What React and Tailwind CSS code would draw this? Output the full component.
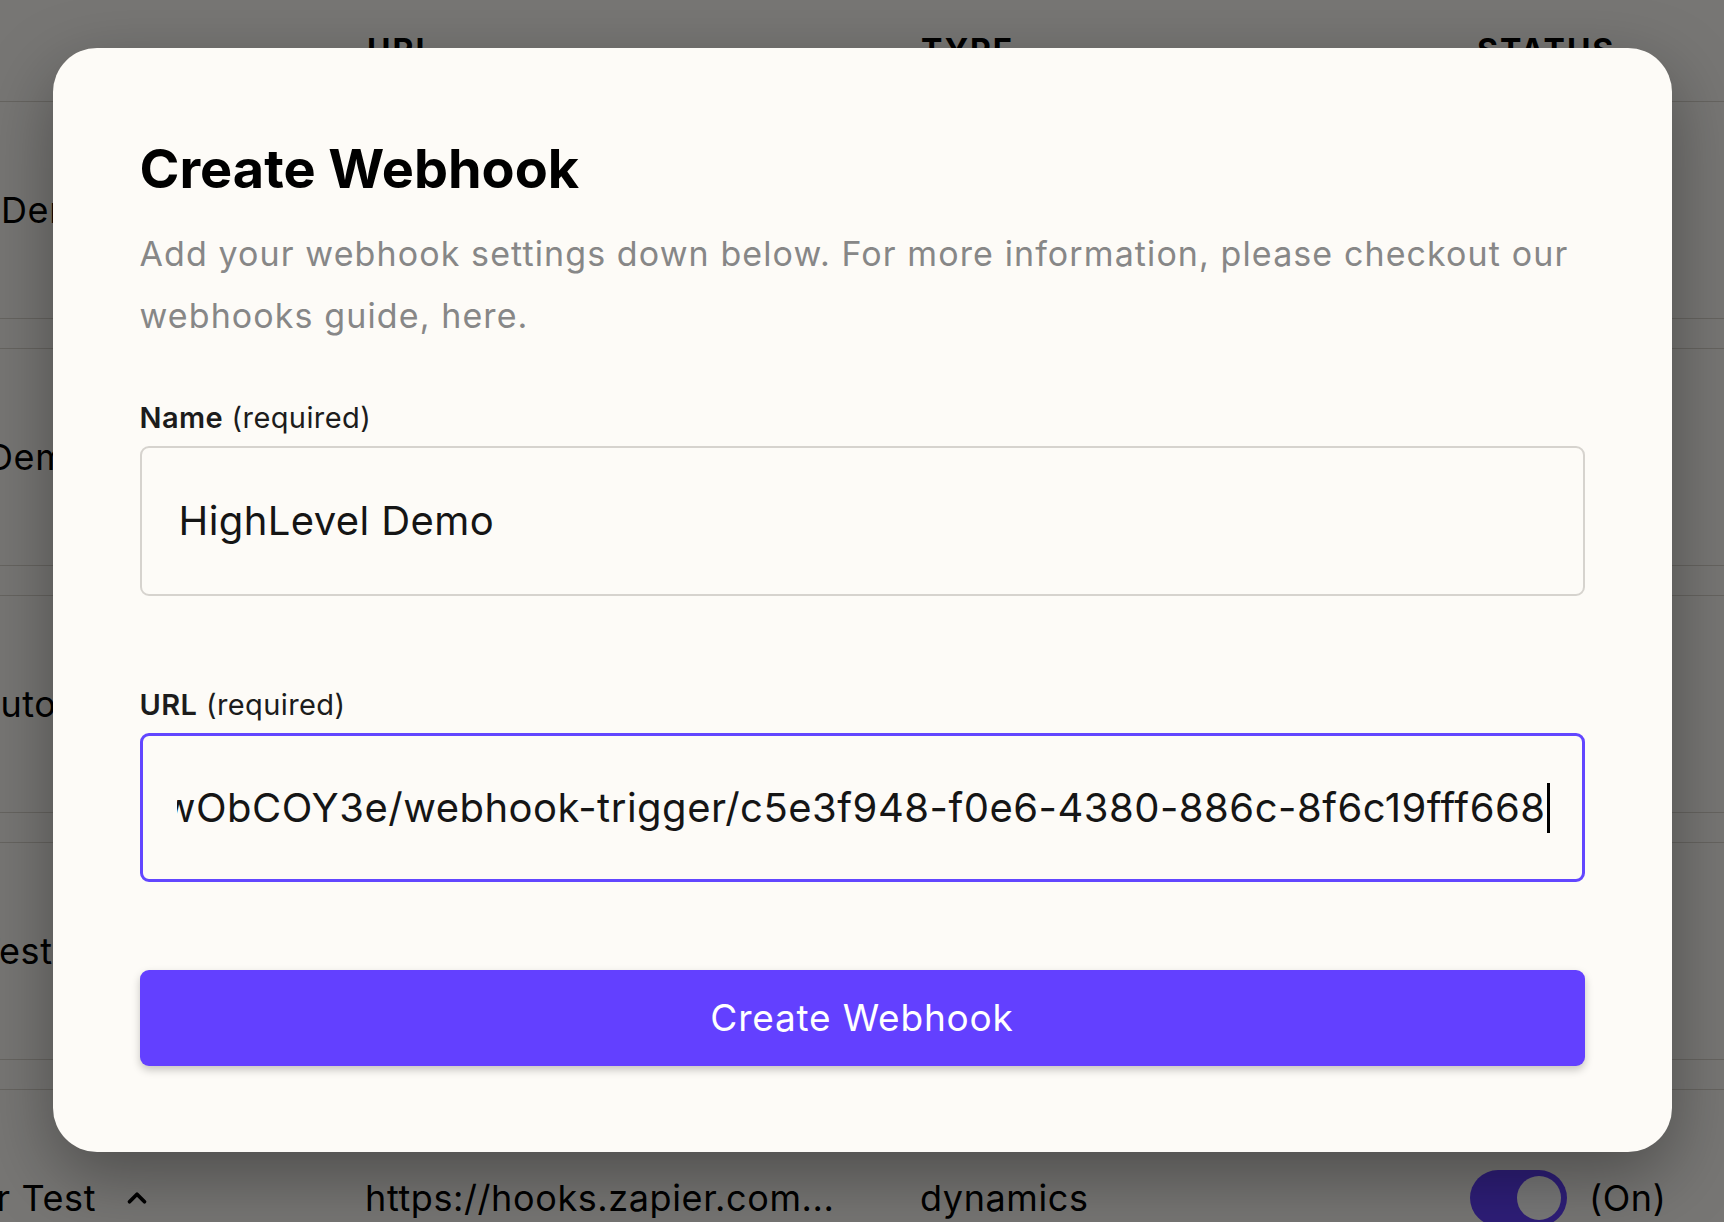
import React from "react";
import { ChevronUp } from "lucide-react";

const rows = [
  { name: "Demo", off: "ml-[1px]" },
  { name: "Demo", off: "-ml-[13px]" },
  { name: "Auto", off: "-ml-[25px]" },
  { name: "Test", off: "-ml-[22px]" },
  { name: "Zapier Test", off: "-ml-[101px]", chevron: true },
];

function Toggle() {
  return (
    <div className="flex h-[56px] w-[97px] items-center justify-end rounded-full bg-[#6340ff] px-[6px]">
      <div className="h-[44px] w-[44px] rounded-full bg-white" />
    </div>
  );
}

function Row({ row, last }) {
  return (
    <div>
      <div className="grid h-[217px] grid-cols-[365px_555px_550px_1fr] items-center border-b border-[#d9d5cc] text-[36px] tracking-[0.6px] text-black">
        <div className="flex items-center overflow-visible">
          <span className={`whitespace-nowrap ${row.off}`}>{row.name}</span>
          {row.chevron && <ChevronUp className="ml-[26px] h-[30px] w-[30px]" strokeWidth={3} />}
        </div>
        <div className="whitespace-nowrap">https://hooks.zapier.com...</div>
        <div>dynamics</div>
        <div className="flex items-center gap-[22px]">
          <Toggle />
          <span>(On)</span>
        </div>
      </div>
      {!last && <div className="h-[30px] border-b border-[#d9d5cc]" />}
    </div>
  );
}

export default function App() {
  return (
    <div className="relative h-[1222px] w-[1724px] overflow-hidden bg-[#fdfbf7] font-[Inter,sans-serif]">
      {/* Underlying page */}
      <div className="flex flex-col">
        <div className="grid h-[102px] grid-cols-[365px_555px_550px_1fr] border-b border-[#d9d5cc] pt-[35px] text-[32px] font-bold uppercase leading-[32px] tracking-[2px] text-black">
          <div />
          <div className="pl-[2px]">URL</div>
          <div className="pl-[1px]">Type</div>
          <div className="pl-[7px]">Status</div>
        </div>
        {rows.map((r, i) => (
          <Row key={i} row={r} last={i === rows.length - 1} />
        ))}
      </div>

      {/* Overlay */}
      <div className="absolute inset-0 bg-black/[0.53]" />

      {/* Modal */}
      <div className="absolute inset-0 flex justify-center pt-[48px]">
        <div className="flex h-[1104px] w-[1619px] flex-col rounded-[44px] bg-[#fdfbf7] px-[87px] pt-[94px] shadow-[0_24px_70px_rgba(0,0,0,0.35)]">
          <h1 className="text-[54px] font-bold leading-[54px] text-black">Create Webhook</h1>
          <p className="mt-[27px] text-[34px] leading-[62px] tracking-[1.1px] text-[#878787]">
            Add your webhook settings down below. For more information, please checkout our
            <br />
            webhooks guide, here.
          </p>

          <label className="mt-[53px] text-[29px] leading-[36px] tracking-[0.4px] text-[#1c1c1c]">
            <span className="font-semibold">Name</span> (required)
          </label>
          <div className="mt-[10px] flex h-[150px] items-center rounded-[9px] border-2 border-[#d6d3ce] pl-[37px] text-[40px] tracking-[0.4px] text-[#151515]">
            HighLevel Demo
          </div>

          <label className="mt-[91px] text-[29px] leading-[36px] tracking-[0.4px] text-[#1c1c1c]">
            <span className="font-semibold">URL</span> (required)
          </label>
          <div className="mt-[10px] flex h-[149px] items-center rounded-[9px] border-[3px] border-[#6246ff] pl-[34px] pr-[32px]">
            <div className="flex min-w-0 flex-1 items-center justify-end overflow-hidden">
              <span className="shrink-0 whitespace-nowrap text-[40px] tracking-[0.5px] text-[#151515]">
                wObCOY3e/webhook-trigger/c5e3f948-f0e6-4380-886c-8f6c19fff668
              </span>
              <span className="ml-[1px] h-[50px] w-[3px] shrink-0 bg-black" />
            </div>
          </div>

          <button className="mt-[88px] flex h-[96px] items-center justify-center rounded-[9px] bg-[#6340ff] text-[37px] tracking-[0.8px] text-white shadow-[0_4px_8px_rgba(0,0,0,0.22)]">
            Create Webhook
          </button>
        </div>
      </div>
    </div>
  );
}
